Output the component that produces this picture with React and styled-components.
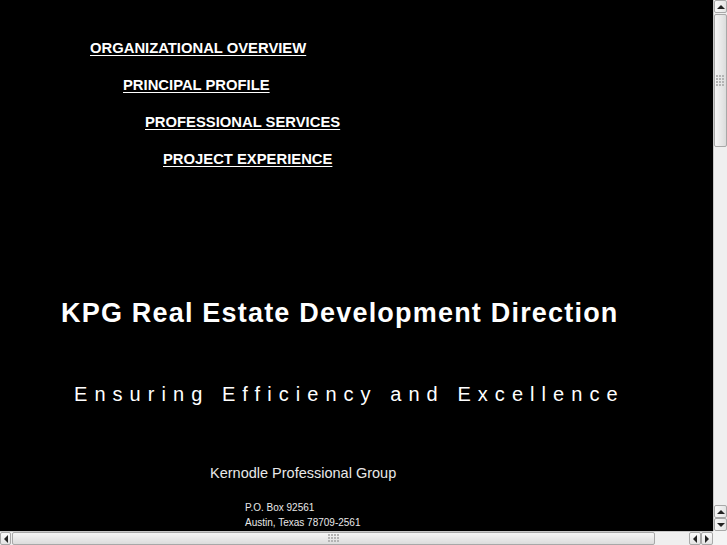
import React from 'react'
import styled, { createGlobalStyle } from 'styled-components'

const Global = createGlobalStyle`
  html, body {
    margin: 0;
    padding: 0;
    background: #000;
    overflow: hidden;
  }
  body {
    font-family: "Liberation Sans", Arial, sans-serif;
    color: #fff;
  }
`

const Page = styled.div`
  width: 713px;
  height: 531px;
  padding-top: 30px;
  box-sizing: border-box;
`

const Nav = styled.nav`
  display: flex;
  flex-direction: column;
  align-items: flex-start;
`

const NavLink = styled.a`
  display: block;
  margin-left: ${props => props.indent}px;
  height: 37px;
  line-height: 37px;
  font-size: 14.8px;
  font-weight: bold;
  color: #fff;
  text-decoration: underline;
  text-underline-offset: 2px;
`

const Title = styled.h1`
  margin: 119px 0 0 61px;
  font-size: 27px;
  line-height: 32px;
  font-weight: bold;
  letter-spacing: 1.2px;
  white-space: nowrap;
`

const Tagline = styled.p`
  margin: 53px 0 0 74px;
  font-size: 20px;
  line-height: 24px;
  letter-spacing: 7.05px;
  white-space: nowrap;
`

const Company = styled.p`
  margin: 57px 0 0 210px;
  font-size: 14.5px;
  line-height: 20px;
  color: #e8e8e8;
`

const Address = styled.div`
  margin: 17px 0 0 245px;
  font-size: 10px;
  line-height: 15px;
  color: #e8e8e8;
`

/* browser chrome scrollbars drawn over the page edge */
const VBar = styled.div`
  position: fixed;
  top: 0;
  right: 0;
  width: 14px;
  height: 531px;
  background: #efefef;
  border-left: 1px solid #c8c8c8;
  box-sizing: border-box;
  display: flex;
  flex-direction: column;
`

const HBar = styled.div`
  position: fixed;
  left: 0;
  bottom: 0;
  width: 713px;
  height: 14px;
  background: #efefef;
  border-top: 1px solid #c8c8c8;
  box-sizing: border-box;
  display: flex;
`

const Corner = styled.div`
  position: fixed;
  right: 0;
  bottom: 0;
  width: 14px;
  height: 14px;
  background: #f4f4f4;
`

const Arrow = styled.div`
  flex: none;
  width: ${props => props.w || 13}px;
  height: ${props => props.h || 13}px;
  box-sizing: border-box;
  border: 1px solid #a8a8a8;
  border-radius: 2px;
  background: linear-gradient(${props => (props.vertical ? '90deg' : '180deg')}, #fafafa, #e4e4e4);
  display: flex;
  align-items: center;
  justify-content: center;
  svg { display: block; }
`

const Thumb = styled.div`
  flex: none;
  ${props => (props.vertical
    ? `height: ${props.size}px; margin: 1px 0;`
    : `width: ${props.size}px; margin: 0 1px;`)}
  box-sizing: border-box;
  border: 1px solid #a8a8a8;
  border-radius: 2px;
  background: linear-gradient(${props => (props.vertical ? '90deg' : '180deg')}, #f6f6f6, #dcdcdc);
  display: flex;
  align-items: center;
  justify-content: center;
`

const Track = styled.div`
  flex: 1;
`

const Grip = ({ cols, rows }) => (
  <svg width={cols * 3} height={rows * 3}>
    {Array.from({ length: rows }).map((_, r) =>
      Array.from({ length: cols }).map((_, c) => (
        <rect key={`${r}-${c}`} x={c * 3} y={r * 3} width="2" height="2" fill="#b4b4b4" />
      ))
    )}
  </svg>
)

const Tri = ({ dir }) => {
  const pts = {
    up: '0,5 4,1 8,5',
    down: '0,1 4,5 8,1',
    left: '5,0 1,4 5,8',
    right: '1,0 5,4 1,8',
  }[dir]
  const vertical = dir === 'up' || dir === 'down'
  return (
    <svg width={vertical ? 8 : 6} height={vertical ? 6 : 8}>
      <polygon points={pts} fill="#222" />
    </svg>
  )
}

export default function App() {
  return (
    <>
      <Global />
      <Page>
        <Nav>
          <NavLink href="#" indent={90}>ORGANIZATIONAL OVERVIEW</NavLink>
          <NavLink href="#" indent={123}>PRINCIPAL PROFILE</NavLink>
          <NavLink href="#" indent={145}>PROFESSIONAL SERVICES</NavLink>
          <NavLink href="#" indent={163}>PROJECT EXPERIENCE</NavLink>
        </Nav>
        <Title>KPG Real Estate Development Direction</Title>
        <Tagline>Ensuring Efficiency and Excellence</Tagline>
        <Company>Kernodle Professional Group</Company>
        <Address>
          <div>P.O. Box 92561</div>
          <div>Austin, Texas 78709-2561</div>
        </Address>
      </Page>

      <VBar>
        <Arrow vertical><Tri dir="up" /></Arrow>
        <Thumb vertical size={133}><Grip cols={3} rows={4} /></Thumb>
        <Track />
        <Arrow vertical><Tri dir="up" /></Arrow>
        <Arrow vertical><Tri dir="down" /></Arrow>
      </VBar>
      <HBar>
        <Arrow w={11}><Tri dir="left" /></Arrow>
        <Thumb size={643}><Grip cols={4} rows={3} /></Thumb>
        <Track />
        <Arrow w={12}><Tri dir="left" /></Arrow>
        <Arrow w={12}><Tri dir="right" /></Arrow>
      </HBar>
      <Corner />
    </>
  )
}
